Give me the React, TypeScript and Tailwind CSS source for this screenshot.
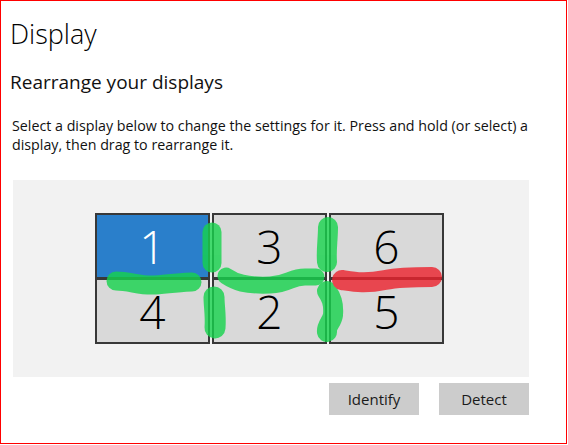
import React from "react";

/* ── Monitor tiles ─────────────────────────────────────── */
const topRow = [
  { n: "1", selected: true },
  { n: "3", selected: false },
  { n: "6", selected: false },
];
const bottomRow = [
  { n: "4", selected: false },
  { n: "2", selected: false },
  { n: "5", selected: false },
];

function Tile({ n, selected }: { n: string; selected: boolean }) {
  return (
    <div
      className={`w-[115px] h-[66px] border-2 border-[#383838] flex items-center justify-center ${
        selected ? "bg-[#2a7fcb] text-white" : "bg-[#d9d9d9] text-black"
      }`}
    >
      <span className="text-[46px] font-light leading-none">{n}</span>
    </div>
  );
}

/* ── Highlighter marks drawn over the screenshot ───────── */
function Marks() {
  const green = "#16d34c";
  const red = "#ec222d";
  return (
    <svg
      className="absolute inset-0 pointer-events-none"
      width={568}
      height={445}
      viewBox="0 0 568 445"
      fill="none"
      strokeLinecap="round"
      strokeLinejoin="round"
    >
      <g opacity={0.8}>
        <path d="M212 232 L212 263" stroke={green} strokeWidth={19} />
        <path d="M116 281 C130 281 140 286 155 285 S185 282 192 282" stroke={green} strokeWidth={19} />
        <path d="M214 297 C214 306 216 316 215 328" stroke={green} strokeWidth={21} />
        <path d="M226 276 C235 282 245 286 270 285 C290 284 290 277 305 277 L316 277" stroke={green} strokeWidth={17} />
        <path d="M328 227 C328 240 326 250 327 262" stroke={green} strokeWidth={20} />
        <path d="M327 291 C331 297 334 303 333 315 C332 322 326 326 327 332" stroke={green} strokeWidth={20} />
        <path d="M342 280 C355 282 365 284 385 280 C400 277 415 277 432 277" stroke={red} strokeWidth={20} />
      </g>
    </svg>
  );
}

/* ── Page ──────────────────────────────────────────────── */
export default function App() {
  return (
    <div
      className="relative w-[568px] h-[445px] bg-white overflow-hidden"
      style={{ fontFamily: "'Open Sans', 'Noto Sans', sans-serif" }}
    >
      <div className="w-[567px] h-[444px] border border-[#ff0000] pl-[9px] pt-[16px]">
        <h1 className="text-[27px] font-light leading-[34px] text-black">Display</h1>

        <h2 className="mt-[18px] text-[19px] leading-[26px] text-[#111]">Rearrange your displays</h2>

        <p className="mt-[21px] ml-[2px] text-[14.25px] leading-[19px] text-[#111]">
          Select a display below to change the settings for it. Press and hold (or select) a
          <br />
          display, then drag to rearrange it.
        </p>

        <div className="mt-[26px] ml-[3px] w-[516px] h-[197px] bg-[#f2f2f2] flex items-center pl-[82px]">
          <div className="flex flex-col">
            <div className="flex gap-[2px]">
              {topRow.map((t) => (
                <Tile key={t.n} {...t} />
              ))}
            </div>
            <div className="flex gap-[2px] -mt-px">
              {bottomRow.map((t) => (
                <Tile key={t.n} {...t} />
              ))}
            </div>
          </div>
        </div>

        <div className="w-[519px] mt-[6px] flex justify-end gap-[20px]">
          <button className="w-[90px] h-[32px] bg-[#cccccc] text-[15px] text-[#1a1a1a]">Identify</button>
          <button className="w-[90px] h-[32px] bg-[#cccccc] text-[15px] text-[#1a1a1a]">Detect</button>
        </div>
      </div>

      <Marks />
    </div>
  );
}
